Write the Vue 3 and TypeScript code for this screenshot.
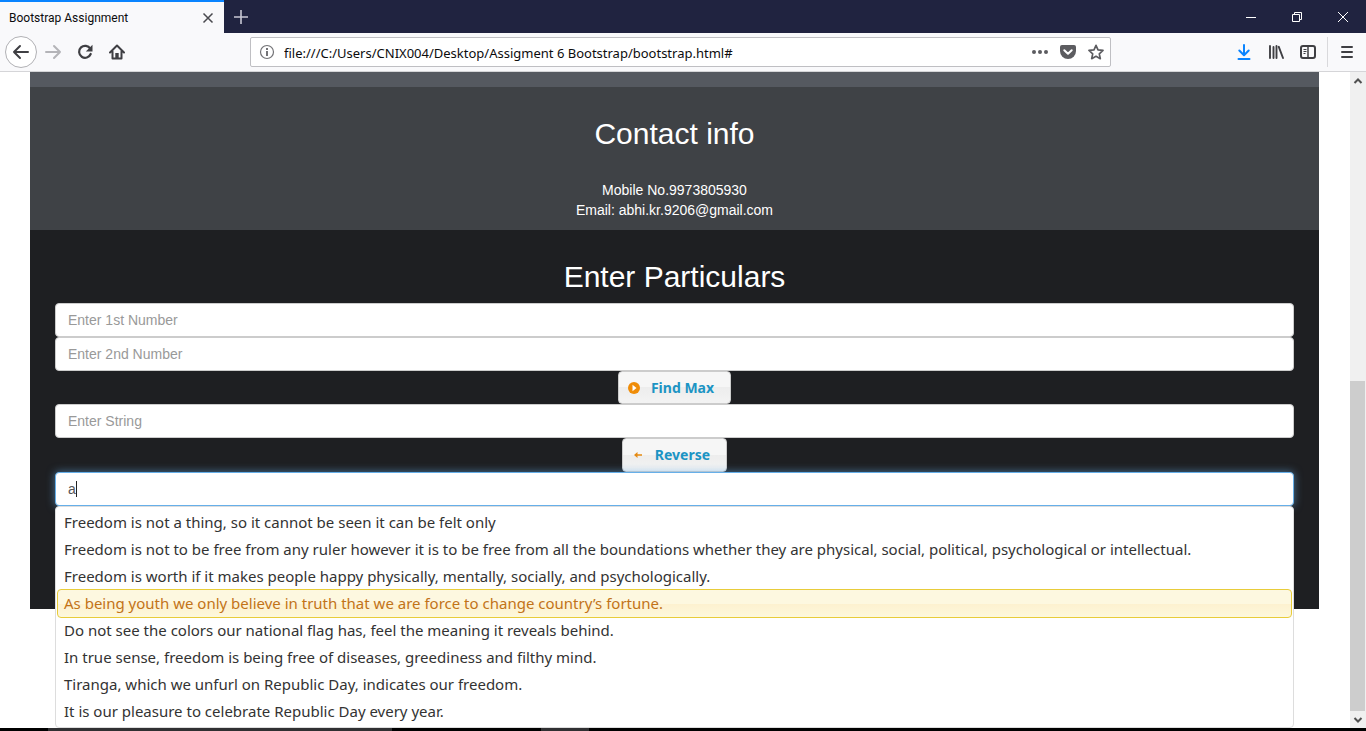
<script setup lang="ts">
import { ref } from 'vue'

const address = ref<string>('file:///C:/Users/CNIX004/Desktop/Assigment 6 Bootstrap/bootstrap.html#')
const first = ref<string>('')
const second = ref<string>('')
const text = ref<string>('')
const query = ref<string>('a')
const active = ref<number>(3)

const suggestions: string[] = [
  'Freedom is not a thing, so it cannot be seen it can be felt only',
  'Freedom is not to be free from any ruler however it is to be free from all the boundations whether they are physical, social, political, psychological or intellectual.',
  'Freedom is worth if it makes people happy physically, mentally, socially, and psychologically.',
  'As being youth we only believe in truth that we are force to change country’s fortune.',
  'Do not see the colors our national flag has, feel the meaning it reveals behind.',
  'In true sense, freedom is being free of diseases, greediness and filthy mind.',
  'Tiranga, which we unfurl on Republic Day, indicates our freedom.',
  'It is our pleasure to celebrate Republic Day every year.',
]
</script>

<template>
  <div class="window">
    <header class="titlebar">
      <div class="tab">
        <span class="tab-title">Bootstrap Assignment</span>
        <button class="icon-btn tab-close" aria-label="Close tab">
          <svg width="16" height="16" viewBox="0 0 16 16"><path d="M3.5 3.5l9 9m0-9l-9 9" stroke="#4a4a4f" stroke-width="1.5" fill="none" /></svg>
        </button>
      </div>
      <button class="icon-btn new-tab" aria-label="New tab">
        <svg width="16" height="16" viewBox="0 0 16 16"><path d="M8 1v14M1 8h14" stroke="#c8c8d4" stroke-width="1.6" fill="none" /></svg>
      </button>
      <div class="win-controls">
        <button class="icon-btn" aria-label="Minimize">
          <svg width="12" height="12" viewBox="0 0 12 12"><path d="M1 6.5h10" stroke="#fff" fill="none" /></svg>
        </button>
        <button class="icon-btn" aria-label="Restore">
          <svg width="12" height="12" viewBox="0 0 12 12"><path d="M1.5 3.5h7v7h-7zM3.500 3.500v-2h7v7h-2" stroke="#fff" fill="none" /></svg>
        </button>
        <button class="icon-btn" aria-label="Close window">
          <svg width="12" height="12" viewBox="0 0 12 12"><path d="M1 1l10 10M11 1L1 11" stroke="#fff" fill="none" /></svg>
        </button>
      </div>
    </header>

    <nav class="toolbar">
      <div class="nav-buttons">
        <button class="icon-btn back" aria-label="Back">
          <svg width="18" height="18" viewBox="0 0 18 18"><path d="M16 9H2M8 3L2 9l6 6" stroke="#3f3f43" stroke-width="2" stroke-linecap="round" stroke-linejoin="round" fill="none" /></svg>
        </button>
        <button class="icon-btn" aria-label="Forward">
          <svg width="18" height="18" viewBox="0 0 18 18"><path d="M2 9h14M10 3l6 6-6 6" stroke="#b4b4b8" stroke-width="2" stroke-linecap="round" stroke-linejoin="round" fill="none" /></svg>
        </button>
        <button class="icon-btn" aria-label="Reload">
          <svg width="16" height="16" viewBox="0 0 16 16"><path d="M13.300 4.800A6 6 0 1 0 13.700 10" stroke="#3f3f43" stroke-width="2.200" stroke-linecap="round" fill="none" /><path d="M15.500 0.800v6.700H8.800z" fill="#3f3f43" /></svg>
        </button>
        <button class="icon-btn" aria-label="Home">
          <svg width="16" height="16" viewBox="0 0 16 16"><path d="M1 8.500L8 1.500l7 7M3.500 7.500V14.500h9V7.500" stroke="#3f3f43" stroke-width="2" stroke-linecap="round" stroke-linejoin="round" fill="none" /><path d="M6.300 9h3.400v5H6.300z" fill="#3f3f43" /></svg>
        </button>
      </div>
      <div class="urlbar">
        <svg class="info" width="16" height="16" viewBox="0 0 16 16"><circle cx="8" cy="8" r="6.500" fill="none" stroke="#737377" stroke-width="1.200" /><path d="M7 4h2v2H7zM7 7h2v5H7z" fill="#737377" /></svg>
        <input v-model="address" class="url" aria-label="Address" spellcheck="false" />
        <button class="icon-btn" aria-label="Page actions">
          <svg width="16" height="16" viewBox="0 0 16 16" fill="#5c5c60"><circle cx="2" cy="8" r="2" /><circle cx="8" cy="8" r="2" /><circle cx="14" cy="8" r="2" /></svg>
        </button>
        <button class="icon-btn" aria-label="Save to Pocket">
          <svg width="16" height="16" viewBox="0 0 16 16"><path d="M2 1h12a2 2 0 0 1 2 2v4a8 8 0 0 1-16 0V3a2 2 0 0 1 2-2z" fill="#5c5c60" /><path d="M4.300 6.200L8 9.800l3.700-3.600" stroke="#fff" stroke-width="2" stroke-linecap="round" stroke-linejoin="round" fill="none" /></svg>
        </button>
        <button class="icon-btn" aria-label="Bookmark">
          <svg width="16" height="16" viewBox="0 0 16 16"><path d="M8 1.300l2 4.500 5 .6-3.700 3.400 1 4.900L8 12.300l-4.300 2.400 1-4.900L1 6.400l5-.6z" stroke="#5c5c60" stroke-width="1.700" stroke-linejoin="round" fill="none" /></svg>
        </button>
      </div>
      <div class="tools">
        <button class="icon-btn" aria-label="Downloads">
          <svg width="16" height="16" viewBox="0 0 16 16"><path d="M8 1v10M3.300 6.500L8 11.200l4.700-4.700M2.500 15h11" stroke="#0a84ff" stroke-width="2" stroke-linecap="round" stroke-linejoin="round" fill="none" /></svg>
        </button>
        <button class="icon-btn" aria-label="Library">
          <svg width="16" height="16" viewBox="0 0 16 16"><path d="M2 2v12M5.500 3v11M8.500 2v12M10.800 2.800L15 14" stroke="#3f3f43" stroke-width="1.900" stroke-linecap="round" fill="none" /></svg>
        </button>
        <button class="icon-btn" aria-label="Sidebars">
          <svg width="16" height="16" viewBox="0 0 16 16"><rect x="1" y="2" width="14" height="12" rx="2" stroke="#3f3f43" stroke-width="2" fill="none" /><path d="M8 2v12" stroke="#3f3f43" stroke-width="1.500" /><path d="M3.500 5.500h3M3.500 7.500h3M3.500 9.500h2" stroke="#3f3f43" /></svg>
        </button>
        <span class="divider"></span>
        <button class="icon-btn" aria-label="Menu">
          <svg width="16" height="16" viewBox="0 0 16 16"><path d="M3 3h10M3 8h10M3 13h10" stroke="#3f3f43" stroke-width="2" stroke-linecap="round" /></svg>
        </button>
      </div>
    </nav>

    <div class="viewport">
      <main class="page">
        <div class="band"></div>
        <section class="contact">
          <h2>Contact info</h2>
          <p>Mobile No.9973805930<br />Email: abhi.kr.9206@gmail.com</p>
        </section>
        <form class="particulars" @submit.prevent>
          <h2>Enter Particulars</h2>
          <input v-model="first" class="field" placeholder="Enter 1st Number" aria-label="Enter 1st Number" />
          <input v-model="second" class="field" placeholder="Enter 2nd Number" aria-label="Enter 2nd Number" />
          <button type="button" class="action">
            <svg width="16" height="16" viewBox="0 0 16 16"><circle cx="8" cy="8" r="6" fill="#ef8c08" /><path d="M6.500 4.800L10.500 8l-4 3.200z" fill="#fff" /></svg>
            Find Max
          </button>
          <input v-model="text" class="field" placeholder="Enter String" aria-label="Enter String" />
          <button type="button" class="action">
            <svg width="16" height="16" viewBox="0 0 16 16"><path d="M4 8l3.500-3v2.200H12v1.600H7.500V11z" fill="#e58a12" /></svg>
            Reverse
          </button>
          <div class="combo">
            <input v-model="query" class="field focused" aria-label="Search quotes" />
            <span class="caret"></span>
            <ul class="menu">
              <li v-for="(s, i) in suggestions" :key="s" :class="{ active: i === active }" @mouseenter="active = i">{{ s }}</li>
            </ul>
          </div>
        </form>
      </main>
      <div class="scrollbar">
        <button class="icon-btn" aria-label="Scroll up">
          <svg width="10" height="8" viewBox="0 0 10 8"><path d="M1.500 6L5 2.500 8.500 6" stroke="#505050" stroke-width="2" fill="none" /></svg>
        </button>
        <div class="track"><div class="thumb"></div></div>
        <button class="icon-btn" aria-label="Scroll down">
          <svg width="10" height="8" viewBox="0 0 10 8"><path d="M1.500 2L5 5.500 8.500 2" stroke="#505050" stroke-width="2" fill="none" /></svg>
        </button>
      </div>
    </div>
    <footer class="taskbar"><span class="task-search"></span><span class="task-item"></span></footer>
  </div>
</template>

<style>
body {
  margin: 0;
}
</style>

<style scoped>
* {
  box-sizing: border-box;
}
.window {
  display: flex;
  flex-direction: column;
  height: 100vh;
  overflow: hidden;
  background: #fff;
  font-family: "Liberation Sans", Arial, sans-serif;
}
.icon-btn {
  display: flex;
  align-items: center;
  justify-content: center;
  padding: 0;
  border: 0;
  background: none;
}
.titlebar {
  display: flex;
  flex: none;
  height: 33px;
  background: #202340;
}
.tab {
  display: flex;
  align-items: center;
  justify-content: space-between;
  width: 224px;
  padding: 0 8px 0 9px;
  border-top: 2px solid #0a84ff;
  background: #f9f9fb;
}
.tab-title {
  font: 12px/16px Roboto, sans-serif;
  color: #0c0c0d;
}
.new-tab {
  width: 34px;
}
.win-controls {
  display: flex;
  margin-left: auto;
}
.win-controls .icon-btn {
  width: 46px;
}
.toolbar {
  display: flex;
  flex: none;
  align-items: center;
  height: 39px;
  border-bottom: 1px solid #d5d5d8;
  background: #f9f9fb;
}
.nav-buttons {
  display: flex;
  align-items: center;
  width: 250px;
  padding-left: 5px;
}
.nav-buttons .icon-btn {
  width: 32px;
  height: 32px;
}
.nav-buttons .back {
  border: 1px solid #b1b1b5;
  border-radius: 50%;
  background: #fff;
}
.urlbar {
  display: flex;
  flex: 1;
  align-items: center;
  gap: 12px;
  height: 30px;
  padding: 0 6px 0 8px;
  border: 1px solid #bfbfc3;
  border-radius: 2px;
  background: #fff;
}
.url {
  flex: 1;
  min-width: 0;
  margin-left: -3px;
  padding: 2px 0 0;
  border: 0;
  outline: 0;
  background: none;
  color: #0c0c0d;
  font: 13px/20px "Noto Sans", sans-serif;
}
.tools {
  display: flex;
  align-items: center;
  justify-content: flex-end;
  width: 255px;
  padding-right: 3px;
}
.tools .icon-btn {
  width: 32px;
  height: 32px;
}
.divider {
  width: 1px;
  height: 30px;
  margin: 0 3px;
  background: #d9d9dc;
}
.viewport {
  display: flex;
  flex: 1;
  min-height: 0;
}
.page {
  flex: 1;
  min-width: 0;
  padding: 0 31px 0 30px;
}
.band {
  height: 15px;
  background: #555960;
}
.contact {
  padding: 30px 25px 10px;
  background: #3f4246;
  color: #fff;
  text-align: center;
}
h2 {
  margin: 0 0 10px;
  font-size: 30px;
  font-weight: 400;
  line-height: 33px;
}
.contact p {
  margin: 30px 0 0;
  font-size: 14px;
  line-height: 20px;
}
.particulars {
  display: flex;
  flex-direction: column;
  align-items: center;
  padding: 30px 25px 103px;
  background: #1e1f22;
  color: #fff;
}
.field {
  display: block;
  width: 100%;
  height: 34px;
  padding: 6px 12px;
  border: 1px solid #ccc;
  border-radius: 4px;
  outline: 0;
  background: #fff;
  color: #555;
  font: 14px/20px "Liberation Sans", Arial, sans-serif;
}
.field::placeholder {
  color: #999;
  opacity: 1;
}
.field.focused {
  border-color: #66afe9;
  box-shadow: 0 0 8px rgba(102, 175, 233, 0.6);
}
.action {
  display: flex;
  align-items: center;
  gap: 9px;
  height: 34px;
  padding: 0 16px 0 7px;
  border: 1px solid #ccc;
  border-radius: 4px;
  background: linear-gradient(#f6f6f6 50%, #ededed 50%, #f3f3f3);
  color: #1c94c4;
  font: bold 14px/20px "Noto Sans", sans-serif;
}
.action:first-of-type {
  height: 33px;
}
.combo {
  position: relative;
  width: 100%;
}
.caret {
  position: absolute;
  top: 9px;
  left: 21px;
  width: 1px;
  height: 16px;
  background: #222;
}
.menu {
  position: absolute;
  top: 100%;
  left: 0;
  width: 100%;
  margin: 0;
  padding: 2px;
  border: 1px solid #ddd;
  border-radius: 4px;
  background: #fff;
  color: #333;
  font: 15px/25px "Noto Sans", sans-serif;
  list-style: none;
}
.menu li {
  padding: 1px 6px;
  white-space: nowrap;
}
.menu li.active {
  margin: -1px;
  border: 1px solid #e8cc3a;
  border-radius: 4px;
  background: linear-gradient(#fdf8e0 50%, #fdf1cf 50%, #fdf8dc);
  color: #c27318;
}
.scrollbar {
  display: flex;
  flex-direction: column;
  width: 16px;
  background: #f0f0f0;
}
.scrollbar .icon-btn {
  height: 17px;
}
.track {
  display: flex;
  flex: 1;
  flex-direction: column;
  justify-content: flex-end;
}
.thumb {
  height: 53%;
  margin-right: 1px;
  background: #cdcdcd;
}
.taskbar {
  display: flex;
  flex: none;
  gap: 149px;
  height: 3px;
  padding-left: 48px;
  background: #000;
}
.task-search {
  width: 344px;
  background: #303032;
}
.task-item {
  width: 48px;
  background: #303032;
}
</style>
